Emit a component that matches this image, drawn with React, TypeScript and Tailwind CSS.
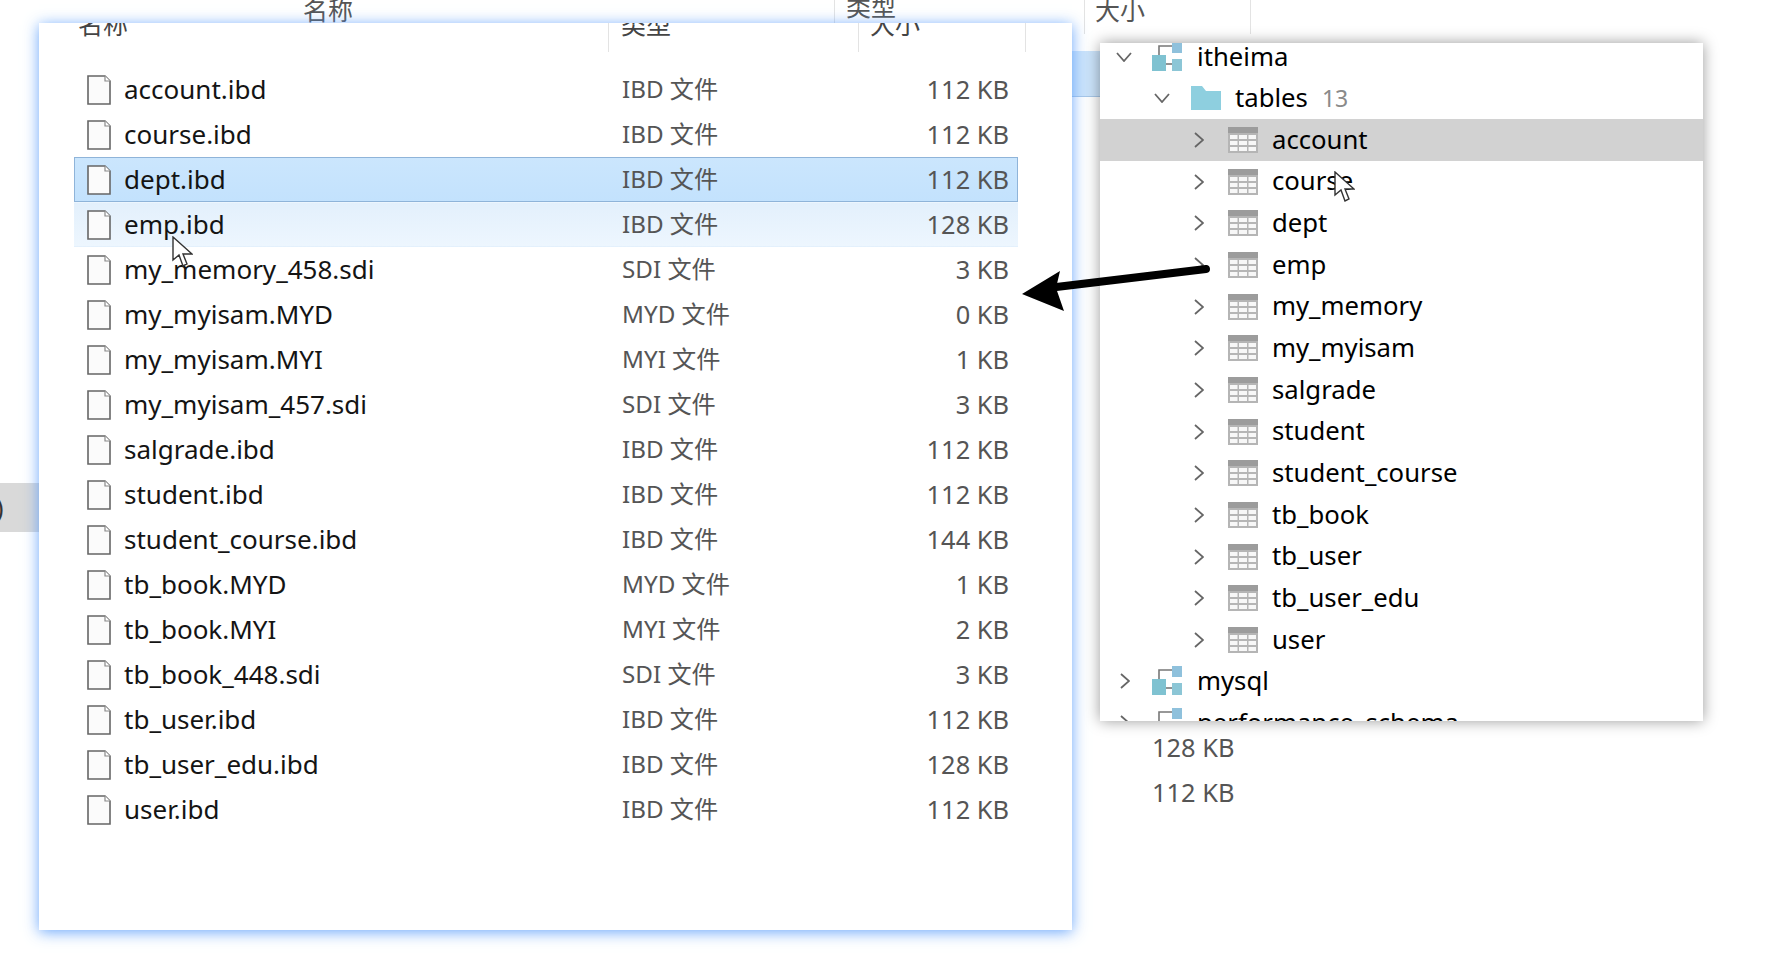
import React from 'react'

const FONT = "font-['Noto_Sans','Noto_Sans_CJK_SC',sans-serif]"

const FILES = [
  ['account.ibd', 'IBD 文件', '112 KB'],
  ['course.ibd', 'IBD 文件', '112 KB'],
  ['dept.ibd', 'IBD 文件', '112 KB'],
  ['emp.ibd', 'IBD 文件', '128 KB'],
  ['my_memory_458.sdi', 'SDI 文件', '3 KB'],
  ['my_myisam.MYD', 'MYD 文件', '0 KB'],
  ['my_myisam.MYI', 'MYI 文件', '1 KB'],
  ['my_myisam_457.sdi', 'SDI 文件', '3 KB'],
  ['salgrade.ibd', 'IBD 文件', '112 KB'],
  ['student.ibd', 'IBD 文件', '112 KB'],
  ['student_course.ibd', 'IBD 文件', '144 KB'],
  ['tb_book.MYD', 'MYD 文件', '1 KB'],
  ['tb_book.MYI', 'MYI 文件', '2 KB'],
  ['tb_book_448.sdi', 'SDI 文件', '3 KB'],
  ['tb_user.ibd', 'IBD 文件', '112 KB'],
  ['tb_user_edu.ibd', 'IBD 文件', '128 KB'],
  ['user.ibd', 'IBD 文件', '112 KB'],
]

const TABLES = [
  'account',
  'course',
  'dept',
  'emp',
  'my_memory',
  'my_myisam',
  'salgrade',
  'student',
  'student_course',
  'tb_book',
  'tb_user',
  'tb_user_edu',
  'user',
]

function FileIcon() {
  return (
    <svg width="24" height="30" viewBox="0 0 24 30" className="shrink-0">
      <path d="M1 1H18L23 6V29H1Z" fill="#fbfbfb" stroke="#666" strokeWidth="1.6" />
      <path d="M18 1V6H23" fill="#fff" stroke="#8a8a8a" strokeWidth="1.2" />
    </svg>
  )
}

function Chevron({ open }: { open?: boolean }) {
  return open ? (
    <svg width="16" height="10" viewBox="0 0 16 10" className="shrink-0">
      <path d="M1 1L8 9L15 1" fill="none" stroke="#666" strokeWidth="1.8" />
    </svg>
  ) : (
    <svg width="10" height="16" viewBox="0 0 10 16" className="shrink-0">
      <path d="M1 1L9 8L1 15" fill="none" stroke="#666" strokeWidth="1.8" />
    </svg>
  )
}

function TableIcon() {
  return (
    <svg width="30" height="26" viewBox="0 0 30 26" className="shrink-0">
      <rect x="0" y="0" width="30" height="26" fill="#b5b5b5" />
      <rect x="0" y="0" width="30" height="6" fill="#9c9c9c" />
      <g fill="#f7f7f7">
        <rect x="2" y="8" width="7.5" height="4" />
        <rect x="11" y="8" width="8" height="4" />
        <rect x="20.5" y="8" width="7.5" height="4" />
        <rect x="2" y="14" width="7.5" height="4" />
        <rect x="11" y="14" width="8" height="4" />
        <rect x="20.5" y="14" width="7.5" height="4" />
        <rect x="2" y="20" width="7.5" height="4" />
        <rect x="11" y="20" width="8" height="4" />
        <rect x="20.5" y="20" width="7.5" height="4" />
      </g>
    </svg>
  )
}

function SchemaIcon() {
  return (
    <svg width="30" height="30" viewBox="0 0 30 30" className="shrink-0">
      <path d="M7 14V4H20" fill="none" stroke="#777" strokeWidth="1.6" />
      <rect x="20" y="0" width="10" height="11" fill="#8fc1dc" />
      <rect x="0" y="13" width="14" height="16" fill="#7fc2d1" />
      <rect x="20" y="17" width="10" height="12" fill="#8cc6d6" />
      <path d="M14 22H20" stroke="#777" strokeWidth="1.6" />
    </svg>
  )
}

function FolderIcon() {
  return (
    <svg width="30" height="24" viewBox="0 0 30 24" className="shrink-0">
      <path d="M0 0H11L15 5H30V24H0Z" fill="#8ecfdf" />
    </svg>
  )
}

function Cursor({ className }: { className: string }) {
  return (
    <svg width="21" height="32" viewBox="0 0 21 32" className={className}>
      <path d="M1 1V24L7 19L11 30L15 28L11 18H20Z" fill="#fff" stroke="#333" strokeWidth="1.4" />
    </svg>
  )
}

function FileRow({ file, index }: { file: string[]; index: number }) {
  const rowClass =
    index === 2
      ? 'border border-[#8fb4d9] bg-gradient-to-b from-[#cbe6fd] to-[#c3e2fd]'
      : index === 3
        ? 'border border-transparent bg-gradient-to-b from-[#e3f0fc] to-[#edf6fe]'
        : 'border border-transparent'
  return (
    <div className={`ml-[35px] flex h-[45px] w-[944px] items-center ${rowClass}`}>
      <div className="ml-[12px] flex w-[536px] items-center gap-[13px]">
        <FileIcon />
        <span className="text-[26px] text-[#141414]">{file[0]}</span>
      </div>
      <span className="ml-[-1px] w-[200px] text-[24.2px] text-[#555]">{file[1]}</span>
      <span className="w-[187px] text-right text-[25.4px] text-[#555]">{file[2]}</span>
    </div>
  )
}

function TreeRow({ name, active }: { name: string; active?: boolean }) {
  return (
    <div className={`flex h-[41.65px] items-center pl-[94px] ${active ? 'bg-[#d2d2d2]' : ''}`}>
      <Chevron />
      <span className="ml-[24px]">
        <TableIcon />
      </span>
      <span className="ml-[14px] text-[25.7px] text-black">{name}</span>
    </div>
  )
}

export default function App() {
  return (
    <div className={`relative flex h-[968px] w-[1780px] items-start overflow-hidden bg-white ${FONT}`}>
      {/* window behind the two overlays */}
      <div className="absolute left-0 top-0 h-[968px] w-full text-[25px] text-[#555]">
        <span className="absolute left-[303px] top-[-8px]">名称</span>
        <span className="absolute left-[846px] top-[-12px]">类型</span>
        <span className="absolute left-[1095px] top-[-8px]">大小</span>
        <div className="absolute left-[834px] top-0 h-[24px] w-px bg-[#e3e3e3]" />
        <div className="absolute left-[1084px] top-0 h-[34px] w-px bg-[#e3e3e3]" />
        <div className="absolute left-[1250px] top-0 h-[34px] w-px bg-[#e3e3e3]" />
        <div className="absolute left-[1060px] top-[51px] h-[46px] w-[60px] border-b border-[#a9c8e8] bg-[#cce4fb]" />
        <div className="absolute left-0 top-[483px] flex h-[49px] w-[50px] items-center bg-[#d9d9d9] text-[#333]">
          <span className="ml-[-4px]">)</span>
        </div>
        <span className="absolute left-[1152px] top-[728px] text-[25.4px]">128 KB</span>
        <span className="absolute left-[1152px] top-[773px] text-[25.4px]">112 KB</span>
      </div>

      <div className="relative ml-[39px] mt-[23px] h-[907px] w-[1033px] shrink-0 overflow-hidden bg-white">
        <div className="relative h-[44px] text-[25px] text-[#444]">
          <span className="absolute left-[39px] top-[-17px]">名称</span>
          <span className="absolute left-[582px] top-[-17px]">类型</span>
          <span className="absolute left-[831px] top-[-17px]">大小</span>
          <div className="absolute left-[569px] top-0 h-[29px] w-px bg-[#e3e3e3]" />
          <div className="absolute left-[819px] top-0 h-[29px] w-px bg-[#e3e3e3]" />
          <div className="absolute left-[986px] top-0 h-[29px] w-px bg-[#e3e3e3]" />
        </div>
        {FILES.map((file, index) => (
          <FileRow key={file[0]} file={file} index={index} />
        ))}
      </div>
      <div className="pointer-events-none absolute left-[39px] top-[23px] h-[907px] w-[1033px] shadow-[0_2px_14px_rgba(80,150,250,0.85)]" />

      <div className="relative z-10 ml-[28px] mt-[43px] h-[678px] w-[603px] shrink-0 overflow-hidden bg-white shadow-[0_0_14px_rgba(0,0,0,0.4)]">
        <div className="mt-[-7px]">
          <div className="flex h-[41.65px] items-center pl-[16px]">
            <Chevron open />
            <span className="ml-[20px]">
              <SchemaIcon />
            </span>
            <span className="ml-[15px] text-[25.7px] text-black">itheima</span>
          </div>
          <div className="flex h-[41.65px] items-center pl-[54px]">
            <Chevron open />
            <span className="ml-[21px]">
              <FolderIcon />
            </span>
            <span className="ml-[14px] text-[25.7px] text-black">tables</span>
            <span className="ml-[14px] text-[23px] text-[#8a8a8a]">13</span>
          </div>
          {TABLES.map((name, index) => (
            <TreeRow key={name} name={name} active={index === 0} />
          ))}
          <div className="flex h-[41.65px] items-center pl-[20px]">
            <Chevron />
            <span className="ml-[22px]">
              <SchemaIcon />
            </span>
            <span className="ml-[15px] text-[25.7px] text-black">mysql</span>
          </div>
          <div className="flex h-[41.65px] items-center pl-[20px]">
            <Chevron />
            <span className="ml-[22px]">
              <SchemaIcon />
            </span>
            <span className="ml-[15px] text-[25.7px] text-black">performance_schema</span>
          </div>
        </div>
      </div>

      <svg width="320" height="60" viewBox="0 0 320 60" className="absolute left-[1010px] top-[255px] z-20">
        <path d="M196 14L38 33" fill="none" stroke="#000" strokeWidth="8" strokeLinecap="round" />
        <path d="M12 39L50 16L46 33L54 56Z" fill="#000" />
      </svg>
      <Cursor className="absolute left-[172px] top-[236px] z-20" />
      <Cursor className="absolute left-[1334px] top-[171px] z-20" />
    </div>
  )
}
